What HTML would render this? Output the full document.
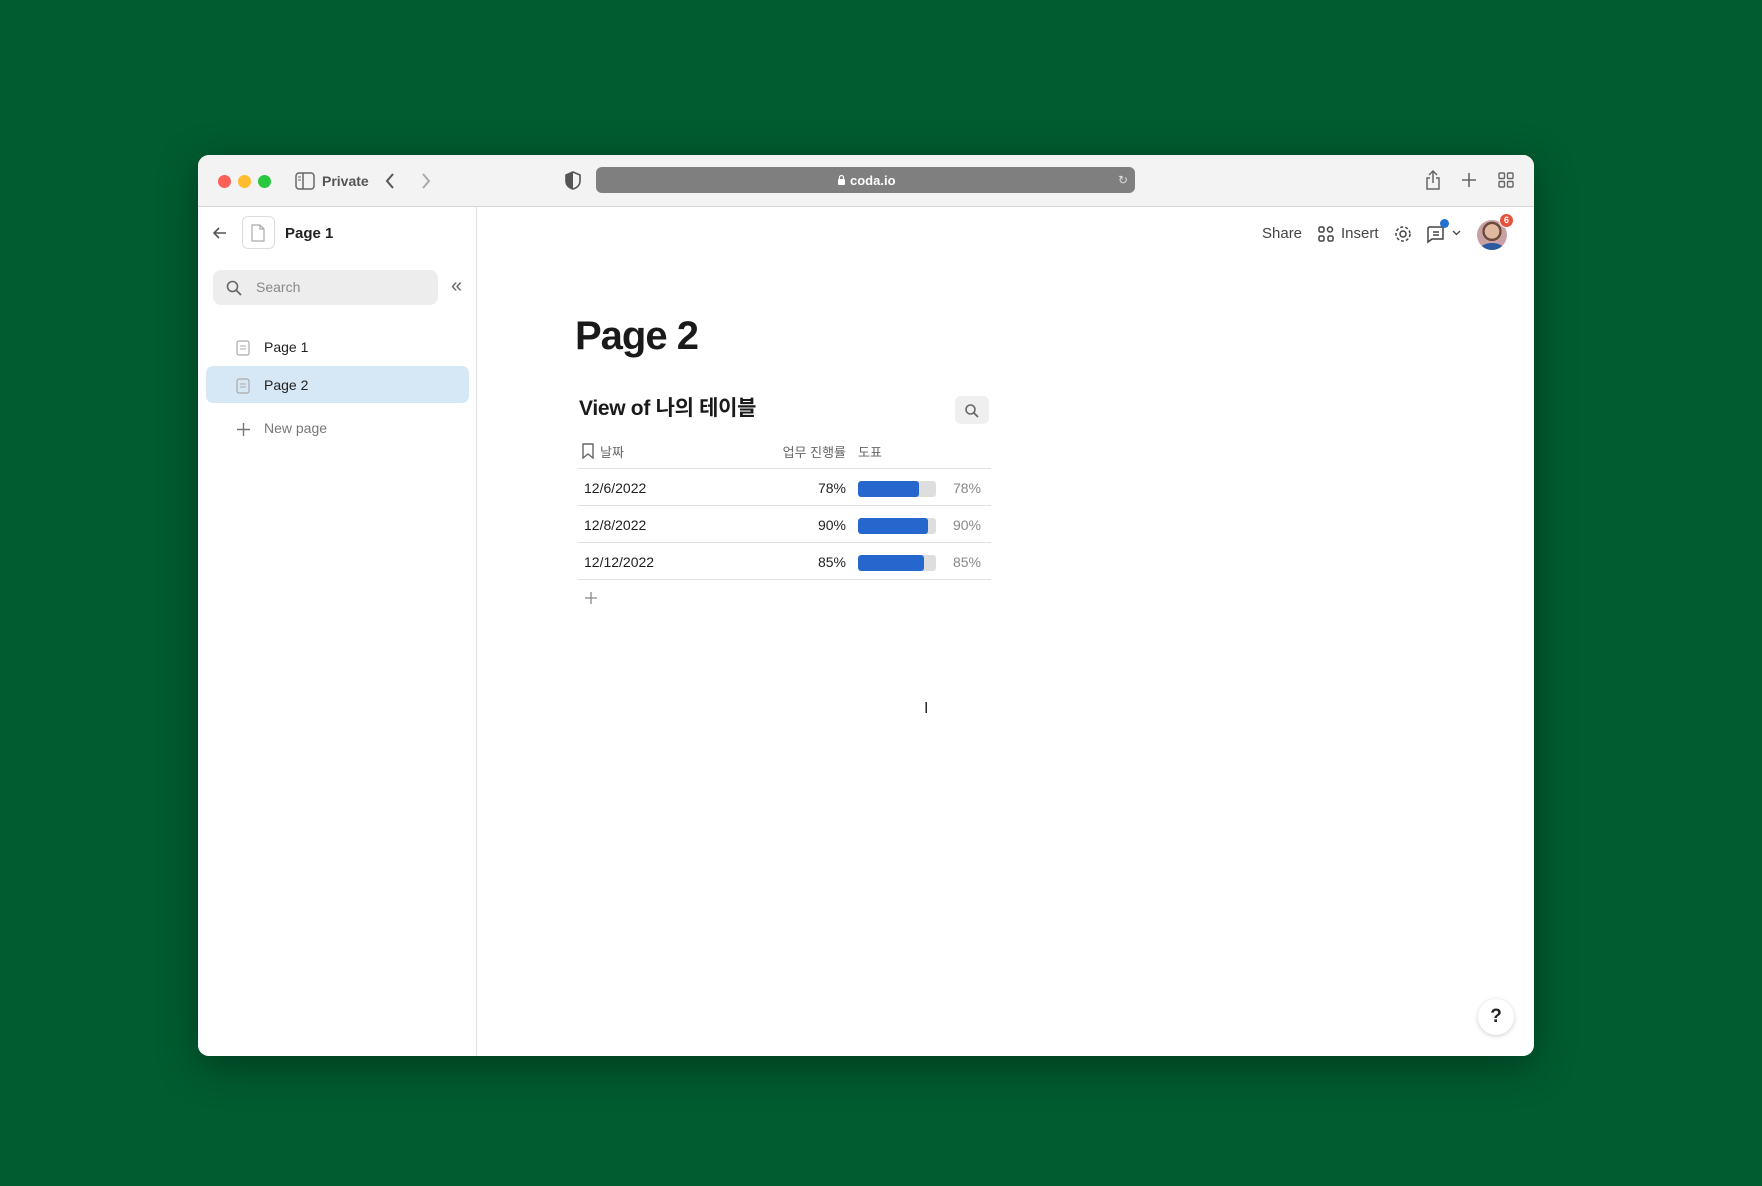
<!DOCTYPE html>
<html><head><meta charset="utf-8"><style>
*{margin:0;padding:0;box-sizing:border-box}
body{width:1762px;height:1186px;background:#015c30;font-family:"Liberation Sans","Noto Sans CJK KR",sans-serif;position:relative;overflow:hidden;color:#1f1f1f}
.win{position:absolute;left:198px;top:155px;width:1336px;height:901px;background:#fff;border-radius:11px;overflow:hidden;box-shadow:0 10px 40px rgba(0,0,0,.35)}
.tb{position:absolute;left:0;top:0;width:100%;height:52px;background:#f3f3f3;border-bottom:1px solid #d6d6d6}
.a{position:absolute}
.dot{position:absolute;top:20px;width:13px;height:13px;border-radius:50%}
.side{position:absolute;left:0;top:52px;width:279px;bottom:0;background:#fff;border-right:1px solid #e2e2e2}
.t{position:absolute;white-space:nowrap}
.row{position:absolute;left:380px;width:413px;height:1px;background:#e0e0e0}
.bar{position:absolute;width:78px;height:16px;background:#dedede;border-radius:3px;overflow:hidden}
.bar i{display:block;height:100%;background:#2667cd;border-radius:3px}
</style></head><body>
<div class="win">
<div class="tb">
 <div class="dot" style="left:20px;background:#fe5f57"></div>
 <div class="dot" style="left:40px;background:#febc2e"></div>
 <div class="dot" style="left:60px;background:#28c840"></div>
 <svg class="a" style="left:97px;top:17px" width="20" height="18" viewBox="0 0 20 18"><rect x="1" y="1" width="18" height="16" rx="3" fill="none" stroke="#666" stroke-width="1.5"/><line x1="8" y1="1" x2="8" y2="17" stroke="#666" stroke-width="1.5"/><line x1="3" y1="5" x2="6" y2="5" stroke="#666"/><line x1="3" y1="8" x2="6" y2="8" stroke="#666"/></svg>
 <div class="t" style="left:124px;top:18px;font-size:14px;font-weight:bold;color:#555">Private</div>
 <svg class="a" style="left:186px;top:17px" width="12" height="18"><path d="M9 2L3 9l6 7" fill="none" stroke="#555" stroke-width="2"/></svg>
 <svg class="a" style="left:222px;top:17px" width="12" height="18"><path d="M3 2l6 7-6 7" fill="none" stroke="#aaa" stroke-width="2"/></svg>
 <svg class="a" style="left:367px;top:16px" width="16" height="19"><path d="M8 1L1 4v6c0 4 3 7 7 8 4-1 7-4 7-8V4z" fill="none" stroke="#555" stroke-width="1.6"/><path d="M8 1v17c-4-1-7-4-7-8V4z" fill="#555"/></svg>
 <div class="a" style="left:398px;top:12px;width:539px;height:26px;background:#7f7f7f;border-radius:6px"></div>
 <svg class="a" style="left:639px;top:19px" width="9" height="11"><rect x="1" y="5" width="7" height="6" rx="1" fill="#fff"/><path d="M2.5 5V3.5a2 2 0 0 1 4 0V5" fill="none" stroke="#fff" stroke-width="1.2"/></svg>
 <div class="t" style="left:652px;top:18px;font-size:13px;color:#fff;font-weight:bold">coda.io</div>
 <div class="t" style="left:920px;top:18px;font-size:12px;color:#ddd">↻</div>
 <svg class="a" style="left:1227px;top:14px" width="16" height="22"><path d="M8 14V2M4 6l4-4 4 4M5 9H2v11h12V9h-3" fill="none" stroke="#666" stroke-width="1.5"/></svg>
 <svg class="a" style="left:1263px;top:17px" width="16" height="16"><path d="M8 1v14M1 8h14" stroke="#666" stroke-width="1.6"/></svg>
 <svg class="a" style="left:1300px;top:17px" width="16" height="16" fill="none" stroke="#666" stroke-width="1.4"><rect x="1" y="1" width="5.5" height="5.5" rx="1"/><rect x="9.5" y="1" width="5.5" height="5.5" rx="1"/><rect x="1" y="9.5" width="5.5" height="5.5" rx="1"/><rect x="9.5" y="9.5" width="5.5" height="5.5" rx="1"/></svg>
</div>
<div class="side">
 <svg class="a" style="left:14px;top:18px" width="16" height="16"><path d="M14 8H2M7 3L2 8l5 5" fill="none" stroke="#555" stroke-width="1.6"/></svg>
 <div class="a" style="left:44px;top:9px;width:33px;height:33px;border:1px solid #ddd;border-radius:6px"></div>
 <svg class="a" style="left:53px;top:17px" width="14" height="18"><path d="M1 1h8l4 4v12H1z M9 1v4h4" fill="none" stroke="#aaa" stroke-width="1.2"/></svg>
 <div class="t" style="left:87px;top:18px;font-size:15px;font-weight:bold;color:#222">Page 1</div>
 <div class="a" style="left:15px;top:63px;width:225px;height:35px;background:#ededed;border-radius:8px"></div>
 <svg class="a" style="left:28px;top:73px" width="16" height="16"><circle cx="6.5" cy="6.5" r="5" fill="none" stroke="#666" stroke-width="1.6"/><path d="M10 10l5 5" stroke="#666" stroke-width="1.8"/></svg>
 <div class="t" style="left:58px;top:72px;font-size:14px;color:#888">Search</div>
 <div class="t" style="left:253px;top:68px;font-size:20px;color:#666">«</div>
 <svg class="a" style="left:38px;top:133px" width="14" height="16"><rect x="1" y="1" width="12" height="14" rx="2" fill="none" stroke="#aaa" stroke-width="1.2"/><path d="M4 6h6M4 9h6" stroke="#aaa"/></svg>
 <div class="t" style="left:66px;top:132px;font-size:14px;color:#222">Page 1</div>
 <div class="a" style="left:8px;top:159px;width:263px;height:37px;background:#d6e8f6;border-radius:7px"></div>
 <svg class="a" style="left:38px;top:171px" width="14" height="16"><rect x="1" y="1" width="12" height="14" rx="2" fill="none" stroke="#aaa" stroke-width="1.2"/><path d="M4 6h6M4 9h6" stroke="#aaa"/></svg>
 <div class="t" style="left:66px;top:170px;font-size:14px;color:#222">Page 2</div>
 <svg class="a" style="left:39px;top:216px" width="13" height="13"><path d="M6.5 0v13M0 6.5h13" stroke="#777" stroke-width="1.4"/></svg>
 <div class="t" style="left:66px;top:213px;font-size:14px;color:#777">New page</div>
</div>
<div class="t" style="left:1064px;top:70px;font-size:15px;color:#444">Share</div>
<svg class="a" style="left:1120px;top:71px" width="16" height="16" fill="none" stroke="#444" stroke-width="1.5"><rect x="1" y="1" width="5" height="5" rx="1.5"/><circle cx="12" cy="3.5" r="2.5"/><rect x="1" y="10" width="5" height="5" rx="1.5"/><rect x="10" y="10" width="5" height="5" rx="1.5"/></svg>
<div class="t" style="left:1143px;top:70px;font-size:15px;color:#444">Insert</div>
<svg class="a" style="left:1196px;top:70px" width="18" height="18"><circle cx="9" cy="9" r="3" fill="none" stroke="#444" stroke-width="1.5"/><circle cx="9" cy="9" r="7" fill="none" stroke="#444" stroke-width="1.5" stroke-dasharray="3 2"/></svg>
<svg class="a" style="left:1228px;top:70px" width="22" height="20"><path d="M3 2h14v12H6l-4 3V3z" fill="none" stroke="#444" stroke-width="1.5"/><path d="M7 7h6M7 10h6" stroke="#444" stroke-width="1.4"/></svg>
<div class="a" style="left:1242px;top:64px;width:9px;height:9px;border-radius:50%;background:#2270d0"></div>
<svg class="a" style="left:1254px;top:75px" width="9" height="6"><path d="M1 1l3.5 3.5L8 1" fill="none" stroke="#444" stroke-width="1.3"/></svg>
<div class="a" style="left:1279px;top:65px;width:30px;height:30px;border-radius:50%;background:radial-gradient(circle at 50% 38%,#e0b9a0 0 30%,#6b4a3a 31% 40%,#c9a1a5 41%);overflow:hidden"><div style="position:absolute;bottom:-6px;left:3px;width:24px;height:13px;background:#2b5aa0;border-radius:50%"></div></div>
<div class="a" style="left:1301px;top:58px;width:15px;height:15px;border-radius:50%;background:#e5533d;border:1.5px solid #fff;color:#fff;font-size:9px;font-weight:bold;text-align:center;line-height:12px">6</div>
<div class="t" style="left:377px;top:159px;font-size:40px;font-weight:bold;color:#1a1a1a;letter-spacing:-1px">Page 2</div>
<div class="t" style="left:381px;top:237px;font-size:21px;font-weight:bold;color:#1a1a1a;letter-spacing:-0.3px">View of 나의 테이블</div>
<div class="a" style="left:757px;top:241px;width:34px;height:28px;background:#efefef;border-radius:6px"></div>
<svg class="a" style="left:766px;top:248px" width="16" height="16"><circle cx="6.5" cy="6.5" r="4.5" fill="none" stroke="#666" stroke-width="1.6"/><path d="M10 10l4 4" stroke="#666" stroke-width="1.8"/></svg>
<svg class="a" style="left:384px;top:288px" width="12" height="16"><path d="M1 1h10v14l-5-4-5 4z" fill="none" stroke="#666" stroke-width="1.4"/></svg>
<div class="t" style="left:402px;top:287px;font-size:13px;color:#666">날짜</div>
<div class="t" style="left:530px;top:287px;width:118px;text-align:right;font-size:13px;color:#666">업무 진행률</div>
<div class="t" style="left:660px;top:287px;font-size:13px;color:#666">도표</div>
<div class="row" style="top:313px"></div>
<div class="row" style="top:350px"></div>
<div class="row" style="top:387px"></div>
<div class="row" style="top:424px"></div>
<div class="t" style="left:386px;top:325px;font-size:14px">12/6/2022</div>
<div class="t" style="left:386px;top:362px;font-size:14px">12/8/2022</div>
<div class="t" style="left:386px;top:399px;font-size:14px">12/12/2022</div>
<div class="t" style="left:548px;top:325px;width:100px;text-align:right;font-size:14px">78%</div>
<div class="t" style="left:548px;top:362px;width:100px;text-align:right;font-size:14px">90%</div>
<div class="t" style="left:548px;top:399px;width:100px;text-align:right;font-size:14px">85%</div>
<div class="bar" style="left:660px;top:326px"><i style="width:78%"></i></div>
<div class="bar" style="left:660px;top:363px"><i style="width:90%"></i></div>
<div class="bar" style="left:660px;top:400px"><i style="width:85%"></i></div>
<div class="t" style="left:700px;top:325px;width:83px;text-align:right;font-size:14px;color:#888">78%</div>
<div class="t" style="left:700px;top:362px;width:83px;text-align:right;font-size:14px;color:#888">90%</div>
<div class="t" style="left:700px;top:399px;width:83px;text-align:right;font-size:14px;color:#888">85%</div>
<svg class="a" style="left:387px;top:437px" width="12" height="12"><path d="M6 0v12M0 6h12" stroke="#888" stroke-width="1.3"/></svg>
<div class="t" style="left:726px;top:545px;font-size:16px;color:#222">I</div>
<div class="a" style="left:1280px;top:844px;width:36px;height:36px;border-radius:50%;background:#fff;box-shadow:0 1px 5px rgba(0,0,0,.2);text-align:center;line-height:36px;font-size:19px;font-weight:bold;color:#222">?</div>
</div>
</body></html>
